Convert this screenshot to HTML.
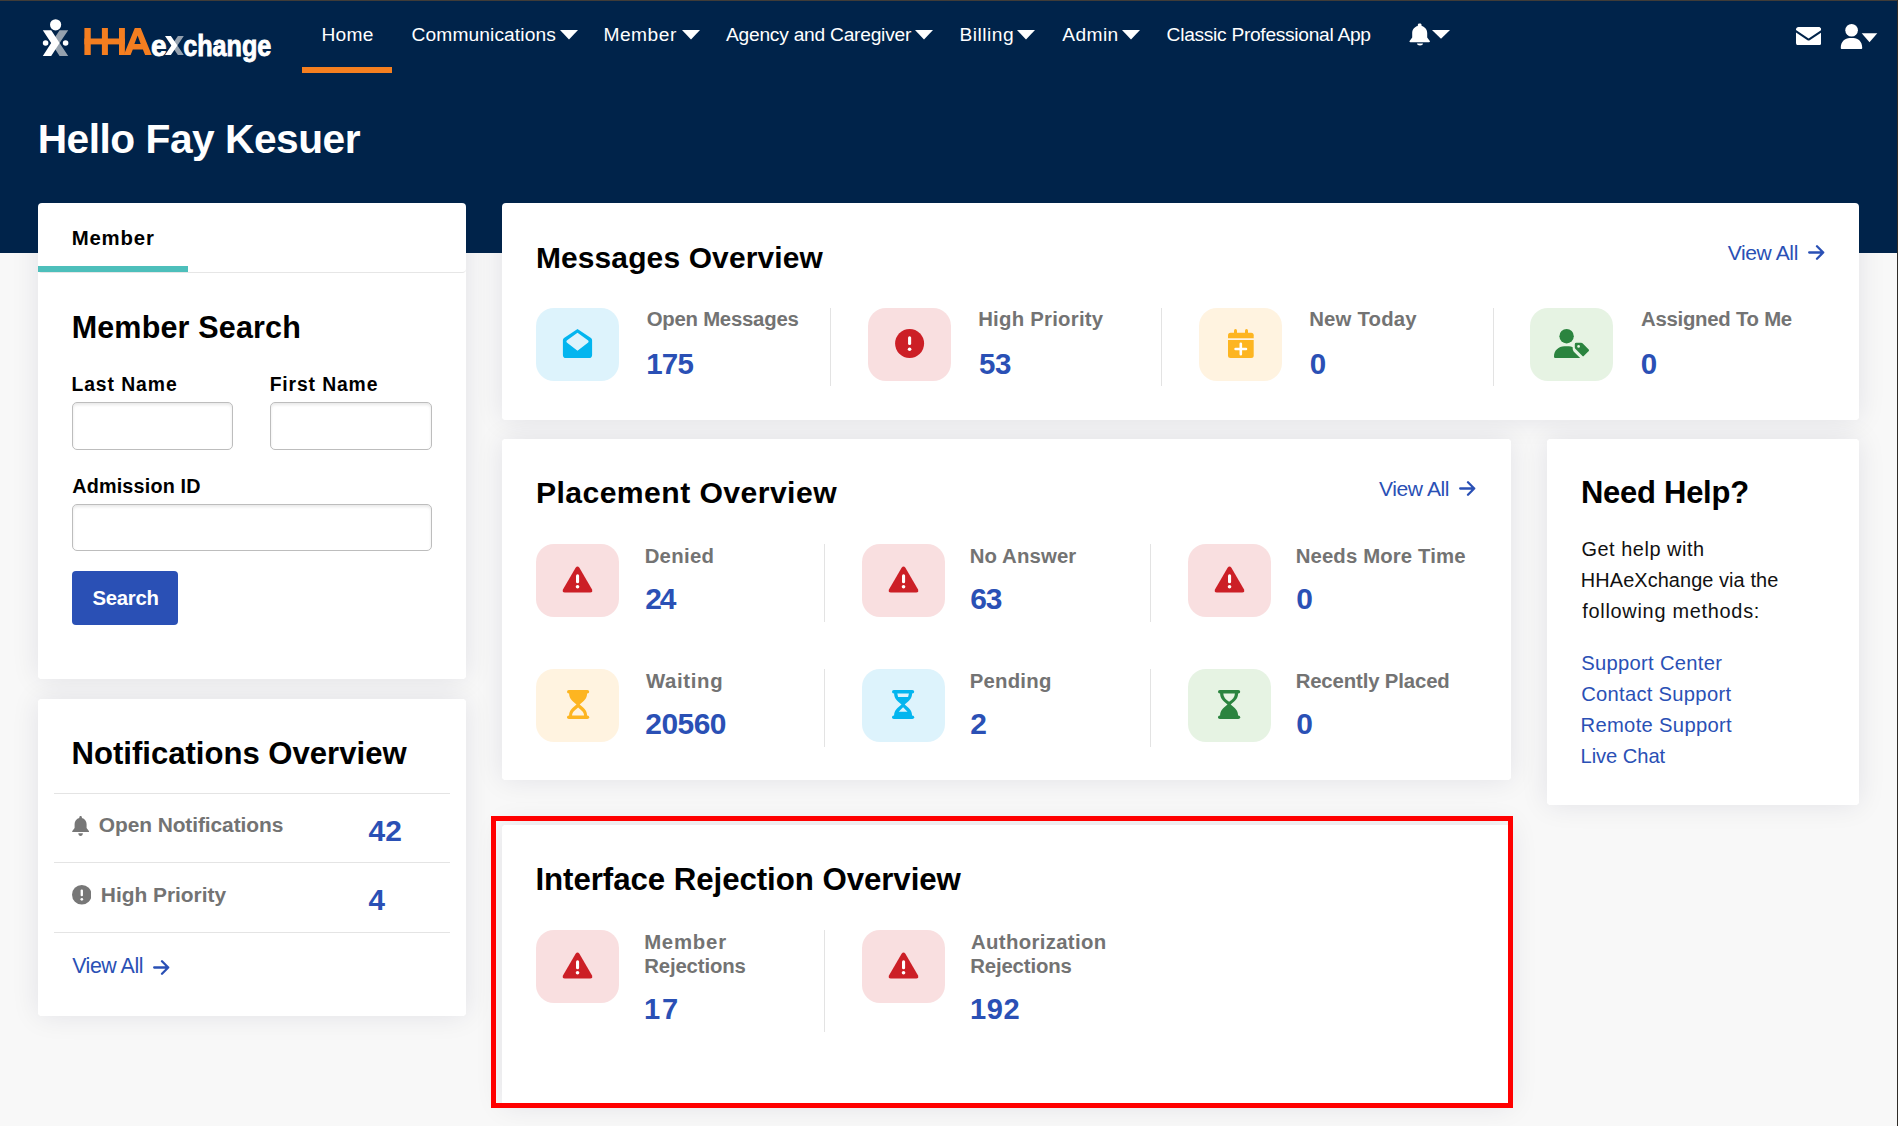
<!DOCTYPE html>
<html><head><meta charset="utf-8"><style>
html,body{margin:0;padding:0}
body{width:1898px;height:1126px;position:relative;overflow:hidden;background:#f8f8f8;font-family:"Liberation Sans",sans-serif}
.t{position:absolute;white-space:nowrap;line-height:1}
</style></head><body>
<div style="position:absolute;left:38px;top:203px;width:428px;height:476px;box-shadow:0 0 28px rgba(0,0,60,0.095);border-radius:4px;background:#fff"></div>
<div style="position:absolute;left:38px;top:699px;width:428px;height:317px;box-shadow:0 0 28px rgba(0,0,60,0.095);border-radius:4px;background:#fff"></div>
<div style="position:absolute;left:502px;top:203px;width:1357px;height:217px;box-shadow:0 0 28px rgba(0,0,60,0.095);border-radius:4px;background:#fff"></div>
<div style="position:absolute;left:502px;top:439px;width:1009px;height:341px;box-shadow:0 0 28px rgba(0,0,60,0.095);border-radius:4px;background:#fff"></div>
<div style="position:absolute;left:1547px;top:439px;width:312px;height:366px;box-shadow:0 0 28px rgba(0,0,60,0.095);border-radius:4px;background:#fff"></div>
<div style="position:absolute;left:502px;top:825px;width:1009px;height:281px;box-shadow:0 0 28px rgba(0,0,60,0.095);border-radius:4px;background:#fff"></div>
<div style="position:absolute;left:0px;top:0px;width:1898px;height:253px;background:#00234a"></div>
<div style="position:absolute;left:0px;top:0px;width:1898px;height:1px;background:#403c38"></div>
<svg style="position:absolute;left:0;top:0" width="300" height="70" viewBox="0 0 300 70">
<defs><clipPath id="rh"><rect x="55.5" y="0" width="40" height="70"/></clipPath><clipPath id="rh2"><rect x="174" y="0" width="40" height="70"/></clipPath></defs>
<circle cx="55.6" cy="24.8" r="5.6" fill="#fff"/>
<polygon points="68.2,30.2 59.6,30.2 51.2,43.1 59.6,56 68.2,56 59.6,43.1" fill="#95a1ae"/>
<polygon points="42.8,30.2 51.2,30.2 59.6,43.1 51.2,56 42.8,56 51.2,43.1" fill="#fff"/>
<circle cx="45.6" cy="43" r="2.8" fill="#fff"/>
<circle cx="65.6" cy="43" r="2.8" fill="#fff"/>
<g fill="#f47e20">
<rect x="84.4" y="28" width="6.35" height="27"/>
<rect x="101.9" y="28" width="6" height="27"/>
<rect x="119" y="28" width="5.9" height="27"/>
<rect x="84.4" y="38.5" width="40.5" height="5.9"/>
<path fill-rule="evenodd" d="M134.8 28H140.7L151.7 55H145.1L142.9 49.5H132.8L130.6 55H123.8ZM137.6 35.5L140.7 44H134.4Z"/>
</g>
<polygon points="183.8,36.1 177.9,36.1 171.4,45.6 177.9,55.1 183.8,55.1 177.4,45.6" fill="#95a1ae"/>
<polygon points="165,36.1 170.9,36.1 177.4,45.6 170.9,55.1 165,55.1 171.4,45.6" fill="#fff"/>
</svg>
<div class="t" style="left:151.03px;top:31.15px;font-size:29.94px;letter-spacing:0.000px;font-weight:700;color:#fff;-webkit-text-stroke:0.9px #fff;transform:scaleX(0.9335);transform-origin:1.17px 0;">e</div>
<div class="t" style="left:182.93px;top:31.15px;font-size:29.94px;letter-spacing:0.000px;font-weight:700;color:#fff;-webkit-text-stroke:0.9px #fff;transform:scaleX(0.8408);transform-origin:1.17px 0;">change</div>
<div class="t" style="left:321.43px;top:24.76px;font-size:19.19px;letter-spacing:0.283px;color:#fff;">Home</div>
<div style="position:absolute;left:302px;top:67px;width:90px;height:6px;background:#f57f20"></div>
<div class="t" style="left:411.62px;top:24.76px;font-size:19.19px;letter-spacing:0.099px;color:#fff;">Communications</div>
<svg style="position:absolute;left:560px;top:29.5px" width="18" height="10" viewBox="0 0 18 10"><polygon points="0,0 18,0 9,9.5" fill="#fff"/></svg>
<div class="t" style="left:603.43px;top:24.76px;font-size:19.19px;letter-spacing:0.505px;color:#fff;">Member</div>
<svg style="position:absolute;left:682px;top:29.5px" width="18" height="10" viewBox="0 0 18 10"><polygon points="0,0 18,0 9,9.5" fill="#fff"/></svg>
<div class="t" style="left:725.96px;top:24.76px;font-size:19.19px;letter-spacing:-0.236px;color:#fff;">Agency and Caregiver</div>
<svg style="position:absolute;left:915px;top:29.5px" width="18" height="10" viewBox="0 0 18 10"><polygon points="0,0 18,0 9,9.5" fill="#fff"/></svg>
<div class="t" style="left:959.43px;top:24.76px;font-size:19.19px;letter-spacing:0.519px;color:#fff;">Billing</div>
<svg style="position:absolute;left:1017.4px;top:29.5px" width="18" height="10" viewBox="0 0 18 10"><polygon points="0,0 18,0 9,9.5" fill="#fff"/></svg>
<div class="t" style="left:1062.26px;top:24.76px;font-size:19.19px;letter-spacing:0.403px;color:#fff;">Admin</div>
<svg style="position:absolute;left:1122px;top:29.5px" width="18" height="10" viewBox="0 0 18 10"><polygon points="0,0 18,0 9,9.5" fill="#fff"/></svg>
<div class="t" style="left:1166.62px;top:24.76px;font-size:19.19px;letter-spacing:-0.298px;color:#fff;">Classic Professional App</div>
<svg style="position:absolute;left:1409px;top:23px" width="22" height="23" viewBox="0 0 22 23"><path d="M11 0.5c1 0 1.6.7 1.6 1.5v.9c3.4.7 5.6 3.6 5.6 7v4.5l2.6 3.6c.4.6 0 1.2-.7 1.2H1.3c-.7 0-1.1-.6-.7-1.2l2.6-3.6V9.9c0-3.4 2.2-6.3 5.6-7V2c0-.8.6-1.5 1.6-1.5zM8 20.5h6c0 1.2-1.3 2-3 2s-3-.8-3-2z" fill="#fff"/></svg>
<svg style="position:absolute;left:1432px;top:29.9px" width="18" height="10" viewBox="0 0 18 10"><polygon points="0,0 18,0 9,8.8" fill="#fff"/></svg>
<svg style="position:absolute;left:1795.8px;top:26.9px" width="25.2" height="18.5" viewBox="0 0 25.2 18.5"><path d="M2.5 0h20.2c1.4 0 2.5 1.1 2.5 2.5v.6L12.6 11.4 0 3.1v-.6C0 1.1 1.1 0 2.5 0zM0 5.6l11.5 7.6c.7.4 1.5.4 2.2 0l11.5-7.6V16c0 1.4-1.1 2.5-2.5 2.5H2.5C1.1 18.5 0 17.4 0 16z" fill="#fff"/></svg>
<svg style="position:absolute;left:1840px;top:23px" width="40" height="27" viewBox="0 0 40 27"><circle cx="11.6" cy="7.3" r="6.3" fill="#fff"/><path d="M0.8 24.5c0-5.8 4.3-9.5 9-9.5h3.6c4.7 0 8.8 3.7 8.8 9.5v.4c0 .6-.5 1-1 1H1.8c-.6 0-1-.4-1-1z" fill="#fff"/><polygon points="21.7,10.2 37.3,10.2 29.5,19.2" fill="#fff"/></svg>
<div class="t" style="left:37.67px;top:118.55px;font-size:40.70px;letter-spacing:-0.486px;font-weight:700;color:#fff;">Hello Fay Kesuer</div>
<div style="position:absolute;left:38px;top:203px;width:428px;height:476px;border-radius:4px;background:#fff"></div>
<div style="position:absolute;left:38px;top:699px;width:428px;height:317px;border-radius:4px;background:#fff"></div>
<div style="position:absolute;left:502px;top:203px;width:1357px;height:217px;border-radius:4px;background:#fff"></div>
<div style="position:absolute;left:502px;top:439px;width:1009px;height:341px;border-radius:4px;background:#fff"></div>
<div style="position:absolute;left:1547px;top:439px;width:312px;height:366px;border-radius:4px;background:#fff"></div>
<div style="position:absolute;left:502px;top:825px;width:1009px;height:281px;border-radius:4px;background:#fff"></div>
<div class="t" style="left:71.64px;top:227.77px;font-size:20.35px;letter-spacing:0.850px;font-weight:700;color:#000;">Member</div>
<div style="position:absolute;left:38px;top:203px;width:428px;height:70px;border-bottom:1px solid #e6e6e6;border-radius:4px;box-sizing:border-box"></div>
<div style="position:absolute;left:38px;top:266px;width:150px;height:6px;background:#4dbfbb"></div>
<div class="t" style="left:71.65px;top:311.96px;font-size:30.52px;letter-spacing:0.158px;font-weight:700;color:#000;">Member Search</div>
<div class="t" style="left:71.40px;top:375.34px;font-size:19.33px;letter-spacing:0.937px;font-weight:700;color:#000;">Last Name</div>
<div class="t" style="left:269.70px;top:375.34px;font-size:19.33px;letter-spacing:0.872px;font-weight:700;color:#000;">First Name</div>
<div style="position:absolute;left:72px;top:402px;width:161px;height:48px;border:1px solid #bdbdbd;border-radius:5px;box-sizing:border-box;box-shadow:inset 0 2px 3px rgba(0,0,0,0.09);background:#fff"></div>
<div style="position:absolute;left:270px;top:402px;width:162px;height:48px;border:1px solid #bdbdbd;border-radius:5px;box-sizing:border-box;box-shadow:inset 0 2px 3px rgba(0,0,0,0.09);background:#fff"></div>
<div class="t" style="left:72.21px;top:477.27px;font-size:19.77px;letter-spacing:0.185px;font-weight:700;color:#000;">Admission ID</div>
<div style="position:absolute;left:72px;top:504px;width:360px;height:47px;border:1px solid #bdbdbd;border-radius:5px;box-sizing:border-box;box-shadow:inset 0 2px 3px rgba(0,0,0,0.09);background:#fff"></div>
<div style="position:absolute;left:72px;top:571px;width:106px;height:54px;background:#2a50b5;border-radius:4px"></div>
<div class="t" style="left:92.41px;top:587.77px;font-size:20.35px;letter-spacing:-0.266px;font-weight:700;color:#fff;">Search</div>
<div class="t" style="left:71.52px;top:737.97px;font-size:31.10px;letter-spacing:-0.006px;font-weight:700;color:#000;">Notifications Overview</div>
<div style="position:absolute;left:54px;top:793px;width:396px;height:1px;background:#e4e4e4"></div>
<div style="position:absolute;left:54px;top:862px;width:396px;height:1px;background:#e4e4e4"></div>
<div style="position:absolute;left:54px;top:932px;width:396px;height:1px;background:#e4e4e4"></div>
<svg style="position:absolute;left:71.8px;top:815.7px" width="17.2" height="20" viewBox="0 0 17.2 20"><path d="M8.6 0c.8 0 1.3.6 1.3 1.3v.8c2.8.6 4.7 3.1 4.7 6v3.9l2.3 3c.4.5 0 1.1-.6 1.1H.9c-.6 0-1-.6-.6-1.1l2.3-3V8.1c0-2.9 1.9-5.4 4.7-6v-.8C7.3.6 7.8 0 8.6 0zM6.3 17.3h4.6c0 1.5-1 2.7-2.3 2.7s-2.3-1.2-2.3-2.7z" fill="#777"/></svg>
<div class="t" style="left:98.84px;top:815.48px;font-size:20.93px;letter-spacing:-0.090px;font-weight:700;color:#737373;">Open Notifications</div>
<div class="t" style="left:368.55px;top:816.05px;font-size:29.94px;letter-spacing:-0.049px;font-weight:700;color:#2a50b5;">42</div>
<svg style="position:absolute;left:71.8px;top:885.4px" width="19.6" height="19.6" viewBox="0 0 20 20"><circle cx="10" cy="10" r="10" fill="#777"/><rect x="8.8" y="4.5" width="2.4" height="7" rx="1.1" fill="#fff"/><circle cx="10" cy="14.6" r="1.35" fill="#fff"/></svg>
<div class="t" style="left:100.80px;top:885.08px;font-size:20.93px;letter-spacing:-0.023px;font-weight:700;color:#737373;">High Priority</div>
<div class="t" style="left:368.56px;top:885.10px;font-size:29.65px;letter-spacing:0.000px;font-weight:700;color:#2a50b5;">4</div>
<div class="t" style="left:72.19px;top:956.11px;font-size:21.37px;letter-spacing:-0.454px;color:#2a50b5;">View All</div>
<svg style="position:absolute;left:153px;top:959.5px" width="17" height="15" viewBox="0 0 17 15"><path d="M1.2 7.5h14M9 1.3l6.2 6.2L9 13.7" stroke="#2a50b5" stroke-width="2.3" fill="none" stroke-linecap="round" stroke-linejoin="round"/></svg>
<div class="t" style="left:535.89px;top:242.65px;font-size:29.94px;letter-spacing:0.151px;font-weight:700;color:#000;">Messages Overview</div>
<div class="t" style="left:1727.69px;top:242.06px;font-size:21.08px;letter-spacing:-0.398px;color:#2a50b5;">View All</div>
<svg style="position:absolute;left:1808.2px;top:245.2px" width="17" height="15" viewBox="0 0 17 15"><path d="M1.2 7.5h14M9 1.3l6.2 6.2L9 13.7" stroke="#2a50b5" stroke-width="2.3" fill="none" stroke-linecap="round" stroke-linejoin="round"/></svg>
<div style="position:absolute;left:536px;top:308px;width:83px;height:73px;border-radius:18px;background:#ddf3fc"></div>
<svg style="position:absolute;left:536px;top:308px" width="83" height="73" viewBox="0 0 83 73"><path fill-rule="evenodd" d="M41.5 20.9L55 30Q56.1 30.9 56.1 32.3V47Q56.1 50.1 53 50.1H30Q26.9 50.1 26.9 47V32.3Q26.9 30.9 28 30ZM41.5 24.7L52.2 32.6Q53.1 33.6 52.2 34.6L41.5 42.7L30.8 34.6Q29.9 33.6 30.8 32.6Z" fill="#03b5ef"/></svg>
<div class="t" style="left:646.67px;top:309.47px;font-size:20.35px;letter-spacing:-0.231px;font-weight:700;color:#737373;">Open Messages</div>
<div class="t" style="left:646.14px;top:348.52px;font-size:29.51px;letter-spacing:-0.665px;font-weight:700;color:#2a50b5;">175</div>
<div style="position:absolute;left:868px;top:308px;width:83px;height:73px;border-radius:18px;background:#f9dfe0"></div>
<svg style="position:absolute;left:868px;top:308px" width="83" height="73" viewBox="0 0 83 73"><circle cx="41.6" cy="35.6" r="14.5" fill="#cc1f26"/><rect x="40.05" y="28.2" width="3.1" height="8.8" rx="1.5" fill="#fff"/><circle cx="41.6" cy="41.2" r="1.8" fill="#fff"/></svg>
<div class="t" style="left:978.14px;top:309.47px;font-size:20.35px;letter-spacing:0.248px;font-weight:700;color:#737373;">High Priority</div>
<div class="t" style="left:979.09px;top:348.52px;font-size:29.51px;letter-spacing:-0.534px;font-weight:700;color:#2a50b5;">53</div>
<div style="position:absolute;left:1199px;top:308px;width:83px;height:73px;border-radius:18px;background:#fff3e0"></div>
<svg style="position:absolute;left:1199px;top:308px" width="83" height="73" viewBox="0 0 83 73"><g fill="#fdb521"><rect x="35" y="21" width="3" height="5" rx="1.5"/><rect x="46" y="21" width="3" height="5" rx="1.5"/><path d="M31.5 24.8H52.2Q54.7 24.8 54.7 27.3V30.2H29V27.3Q29 24.8 31.5 24.8Z"/><path d="M29 32H54.7V47.5Q54.7 50 52.2 50H31.5Q29 50 29 47.5Z"/></g><path d="M41.8 35.8V46.2M36.6 41H47" stroke="#fff" stroke-width="2.6" stroke-linecap="round"/></svg>
<div class="t" style="left:1309.14px;top:309.47px;font-size:20.35px;letter-spacing:0.196px;font-weight:700;color:#737373;">New Today</div>
<div class="t" style="left:1309.82px;top:348.52px;font-size:29.51px;letter-spacing:0.000px;font-weight:700;color:#2a50b5;">0</div>
<div style="position:absolute;left:1530px;top:308px;width:83px;height:73px;border-radius:18px;background:#e6f3e3"></div>
<svg style="position:absolute;left:1530px;top:308px" width="83" height="73" viewBox="0 0 83 73"><g fill="#2b843f"><circle cx="36.6" cy="28.2" r="7.2"/><path d="M24 48.4C24 42.6 28.6 38.3 34.4 38.3H38.8C40.3 38.3 41.6 38.6 42.7 39.2V40.5C42.7 41.8 43.2 43 44.1 43.9L50.2 50.1H25.6C24.7 50.1 24 49.3 24 48.4Z"/><path d="M44 36.2Q44 34 46.2 34H51.2Q52.3 34 53.1 34.8L59.3 41Q60.5 42.3 59.3 43.6L54.3 48.6Q53.1 49.8 51.9 48.6L45 41.7Q44 40.8 44 39.5Z" stroke="#e6f3e3" stroke-width="1.6"/></g><circle cx="48.6" cy="38.4" r="1.35" fill="#e6f3e3"/></svg>
<div class="t" style="left:1640.99px;top:309.47px;font-size:20.35px;letter-spacing:-0.254px;font-weight:700;color:#737373;">Assigned To Me</div>
<div class="t" style="left:1640.82px;top:348.52px;font-size:29.51px;letter-spacing:0.000px;font-weight:700;color:#2a50b5;">0</div>
<div style="position:absolute;left:830px;top:308px;width:1px;height:78px;background:#e3e3e3"></div>
<div style="position:absolute;left:1161px;top:308px;width:1px;height:78px;background:#e3e3e3"></div>
<div style="position:absolute;left:1493px;top:308px;width:1px;height:78px;background:#e3e3e3"></div>
<div class="t" style="left:535.88px;top:477.97px;font-size:30.16px;letter-spacing:0.433px;font-weight:700;color:#000;">Placement Overview</div>
<div class="t" style="left:1378.89px;top:478.16px;font-size:21.08px;letter-spacing:-0.398px;color:#2a50b5;">View All</div>
<svg style="position:absolute;left:1459.4px;top:481.3px" width="17" height="15" viewBox="0 0 17 15"><path d="M1.2 7.5h14M9 1.3l6.2 6.2L9 13.7" stroke="#2a50b5" stroke-width="2.3" fill="none" stroke-linecap="round" stroke-linejoin="round"/></svg>
<div style="position:absolute;left:536px;top:544px;width:83px;height:73px;border-radius:18px;background:#f9dfe0"></div>
<svg style="position:absolute;left:536px;top:544px" width="83" height="73" viewBox="0 0 83 73"><path d="M39.6 23.8Q41.5 21 43.4 23.8L55.9 45.2Q57.2 48.5 54.2 48.5H28.8Q25.8 48.5 27.1 45.2Z" fill="#cc1f26"/><rect x="40" y="30.2" width="3.1" height="9" rx="1.5" fill="#fff"/><circle cx="41.55" cy="42.8" r="1.8" fill="#fff"/></svg>
<div class="t" style="left:644.64px;top:545.77px;font-size:20.35px;letter-spacing:0.293px;font-weight:700;color:#737373;">Denied</div>
<div class="t" style="left:645.35px;top:584.25px;font-size:29.94px;letter-spacing:-2.198px;font-weight:700;color:#2a50b5;">24</div>
<div style="position:absolute;left:824px;top:544px;width:1px;height:78px;background:#e3e3e3"></div>
<div style="position:absolute;left:862px;top:544px;width:83px;height:73px;border-radius:18px;background:#f9dfe0"></div>
<svg style="position:absolute;left:862px;top:544px" width="83" height="73" viewBox="0 0 83 73"><path d="M39.6 23.8Q41.5 21 43.4 23.8L55.9 45.2Q57.2 48.5 54.2 48.5H28.8Q25.8 48.5 27.1 45.2Z" fill="#cc1f26"/><rect x="40" y="30.2" width="3.1" height="9" rx="1.5" fill="#fff"/><circle cx="41.55" cy="42.8" r="1.8" fill="#fff"/></svg>
<div class="t" style="left:969.64px;top:545.77px;font-size:20.35px;letter-spacing:0.142px;font-weight:700;color:#737373;">No Answer</div>
<div class="t" style="left:970.29px;top:584.25px;font-size:29.94px;letter-spacing:-1.110px;font-weight:700;color:#2a50b5;">63</div>
<div style="position:absolute;left:1150px;top:544px;width:1px;height:78px;background:#e3e3e3"></div>
<div style="position:absolute;left:1188px;top:544px;width:83px;height:73px;border-radius:18px;background:#f9dfe0"></div>
<svg style="position:absolute;left:1188px;top:544px" width="83" height="73" viewBox="0 0 83 73"><path d="M39.6 23.8Q41.5 21 43.4 23.8L55.9 45.2Q57.2 48.5 54.2 48.5H28.8Q25.8 48.5 27.1 45.2Z" fill="#cc1f26"/><rect x="40" y="30.2" width="3.1" height="9" rx="1.5" fill="#fff"/><circle cx="41.55" cy="42.8" r="1.8" fill="#fff"/></svg>
<div class="t" style="left:1295.64px;top:545.77px;font-size:20.35px;letter-spacing:0.138px;font-weight:700;color:#737373;">Needs More Time</div>
<div class="t" style="left:1296.20px;top:584.25px;font-size:29.94px;letter-spacing:0.000px;font-weight:700;color:#2a50b5;">0</div>
<div style="position:absolute;left:536px;top:669px;width:83px;height:73px;border-radius:18px;background:#fff3e0"></div>
<svg style="position:absolute;left:536px;top:669px" width="83" height="73" viewBox="0 0 83 73"><g transform="translate(42.1,0)" fill="#fdb521"><rect x="-11.1" y="20.9" width="22.2" height="3.6" rx="1.8"/><rect x="-11.1" y="46.5" width="22.2" height="3.6" rx="1.8"/><path d="M-9 24C-9 29.5-6.5 31.6-1.6 35.5C-6.5 39.4-9 41.5-9 47H9C9 41.5 6.5 39.4 1.6 35.5C6.5 31.6 9 29.5 9 24Z"/><path d="M0 38.4C-4 41.8-5.9 43-6 46.6H6C5.9 43 4 41.8 0 38.4Z" fill="#fff3e0"/></g></svg>
<div class="t" style="left:645.98px;top:670.77px;font-size:20.35px;letter-spacing:0.663px;font-weight:700;color:#737373;">Waiting</div>
<div class="t" style="left:645.35px;top:709.25px;font-size:29.94px;letter-spacing:-0.548px;font-weight:700;color:#2a50b5;">20560</div>
<div style="position:absolute;left:824px;top:669px;width:1px;height:78px;background:#e3e3e3"></div>
<div style="position:absolute;left:862px;top:669px;width:83px;height:73px;border-radius:18px;background:#ddf3fc"></div>
<svg style="position:absolute;left:862px;top:669px" width="83" height="73" viewBox="0 0 83 73"><g transform="translate(41.1,0)" fill="#03b5ef"><rect x="-11.1" y="20.9" width="22.2" height="3.6" rx="1.8"/><rect x="-11.1" y="46.5" width="22.2" height="3.6" rx="1.8"/><path d="M-9 24C-9 29.5-6.5 31.6-1.6 35.5C-6.5 39.4-9 41.5-9 47H9C9 41.5 6.5 39.4 1.6 35.5C6.5 31.6 9 29.5 9 24Z"/><path d="M-5.8 24.6H5.8L5 27.9H-5Z" fill="#ddf3fc"/><path d="M0 38.3L4.4 42.8H-4.4Z" fill="#ddf3fc"/></g></svg>
<div class="t" style="left:969.64px;top:670.77px;font-size:20.35px;letter-spacing:0.242px;font-weight:700;color:#737373;">Pending</div>
<div class="t" style="left:970.35px;top:709.25px;font-size:29.94px;letter-spacing:0.000px;font-weight:700;color:#2a50b5;">2</div>
<div style="position:absolute;left:1150px;top:669px;width:1px;height:78px;background:#e3e3e3"></div>
<div style="position:absolute;left:1188px;top:669px;width:83px;height:73px;border-radius:18px;background:#e6f3e3"></div>
<svg style="position:absolute;left:1188px;top:669px" width="83" height="73" viewBox="0 0 83 73"><g transform="translate(41.1,0)" fill="#2b843f"><rect x="-11.1" y="20.9" width="22.2" height="3.6" rx="1.8"/><rect x="-11.1" y="46.5" width="22.2" height="3.6" rx="1.8"/><path d="M-9 24C-9 29.5-6.5 31.6-1.6 35.5C-6.5 39.4-9 41.5-9 47H9C9 41.5 6.5 39.4 1.6 35.5C6.5 31.6 9 29.5 9 24Z"/><path d="M-5.8 24.6H5.8C5.6 28.2 3.6 30.6 0 32.8C-3.6 30.6-5.6 28.2-5.8 24.6Z" fill="#e6f3e3"/></g></svg>
<div class="t" style="left:1295.64px;top:670.77px;font-size:20.35px;letter-spacing:-0.135px;font-weight:700;color:#737373;">Recently Placed</div>
<div class="t" style="left:1296.20px;top:709.25px;font-size:29.94px;letter-spacing:0.000px;font-weight:700;color:#2a50b5;">0</div>
<div class="t" style="left:1580.93px;top:477.89px;font-size:30.96px;letter-spacing:-0.237px;font-weight:700;color:#000;">Need Help?</div>
<div class="t" style="left:1581.50px;top:539.84px;font-size:19.91px;letter-spacing:0.532px;color:#111;">Get help with</div>
<div class="t" style="left:1580.87px;top:571.14px;font-size:19.91px;letter-spacing:0.083px;color:#111;">HHAeXchange via the</div>
<div class="t" style="left:1582.22px;top:601.64px;font-size:19.91px;letter-spacing:0.722px;color:#111;">following methods:</div>
<div class="t" style="left:1581.27px;top:652.70px;font-size:20.20px;letter-spacing:0.289px;color:#2a50b5;">Support Center</div>
<div class="t" style="left:1581.17px;top:683.80px;font-size:20.20px;letter-spacing:0.283px;color:#2a50b5;">Contact Support</div>
<div class="t" style="left:1580.54px;top:714.90px;font-size:20.20px;letter-spacing:0.321px;color:#2a50b5;">Remote Support</div>
<div class="t" style="left:1580.54px;top:745.80px;font-size:20.20px;letter-spacing:-0.083px;color:#2a50b5;">Live Chat</div>
<div class="t" style="left:535.41px;top:864.35px;font-size:31.25px;letter-spacing:-0.065px;font-weight:700;color:#000;">Interface Rejection Overview</div>
<div style="position:absolute;left:536px;top:930px;width:83px;height:73px;border-radius:18px;background:#f9dfe0"></div>
<svg style="position:absolute;left:536px;top:930px" width="83" height="73" viewBox="0 0 83 73"><path d="M39.6 23.8Q41.5 21 43.4 23.8L55.9 45.2Q57.2 48.5 54.2 48.5H28.8Q25.8 48.5 27.1 45.2Z" fill="#cc1f26"/><rect x="40" y="30.2" width="3.1" height="9" rx="1.5" fill="#fff"/><circle cx="41.55" cy="42.8" r="1.8" fill="#fff"/></svg>
<div class="t" style="left:644.14px;top:932.37px;font-size:20.35px;letter-spacing:0.790px;font-weight:700;color:#737373;">Member</div>
<div class="t" style="left:644.14px;top:955.77px;font-size:20.35px;letter-spacing:-0.123px;font-weight:700;color:#737373;">Rejections</div>
<div class="t" style="left:643.97px;top:994.79px;font-size:29.07px;letter-spacing:1.885px;font-weight:700;color:#2a50b5;">17</div>
<div style="position:absolute;left:824px;top:930px;width:1px;height:102px;background:#e3e3e3"></div>
<div style="position:absolute;left:862px;top:930px;width:83px;height:73px;border-radius:18px;background:#f9dfe0"></div>
<svg style="position:absolute;left:862px;top:930px" width="83" height="73" viewBox="0 0 83 73"><path d="M39.6 23.8Q41.5 21 43.4 23.8L55.9 45.2Q57.2 48.5 54.2 48.5H28.8Q25.8 48.5 27.1 45.2Z" fill="#cc1f26"/><rect x="40" y="30.2" width="3.1" height="9" rx="1.5" fill="#fff"/><circle cx="41.55" cy="42.8" r="1.8" fill="#fff"/></svg>
<div class="t" style="left:970.99px;top:932.37px;font-size:20.35px;letter-spacing:0.337px;font-weight:700;color:#737373;">Authorization</div>
<div class="t" style="left:970.14px;top:955.77px;font-size:20.35px;letter-spacing:-0.123px;font-weight:700;color:#737373;">Rejections</div>
<div class="t" style="left:969.97px;top:994.79px;font-size:29.07px;letter-spacing:0.553px;font-weight:700;color:#2a50b5;">192</div>
<div style="position:absolute;left:491px;top:816px;width:1022px;height:292px;border:5px solid #ff0000;box-sizing:border-box"></div>
<div style="position:absolute;left:1897px;top:0px;width:1px;height:1126px;background:#302c28"></div>
</body></html>
